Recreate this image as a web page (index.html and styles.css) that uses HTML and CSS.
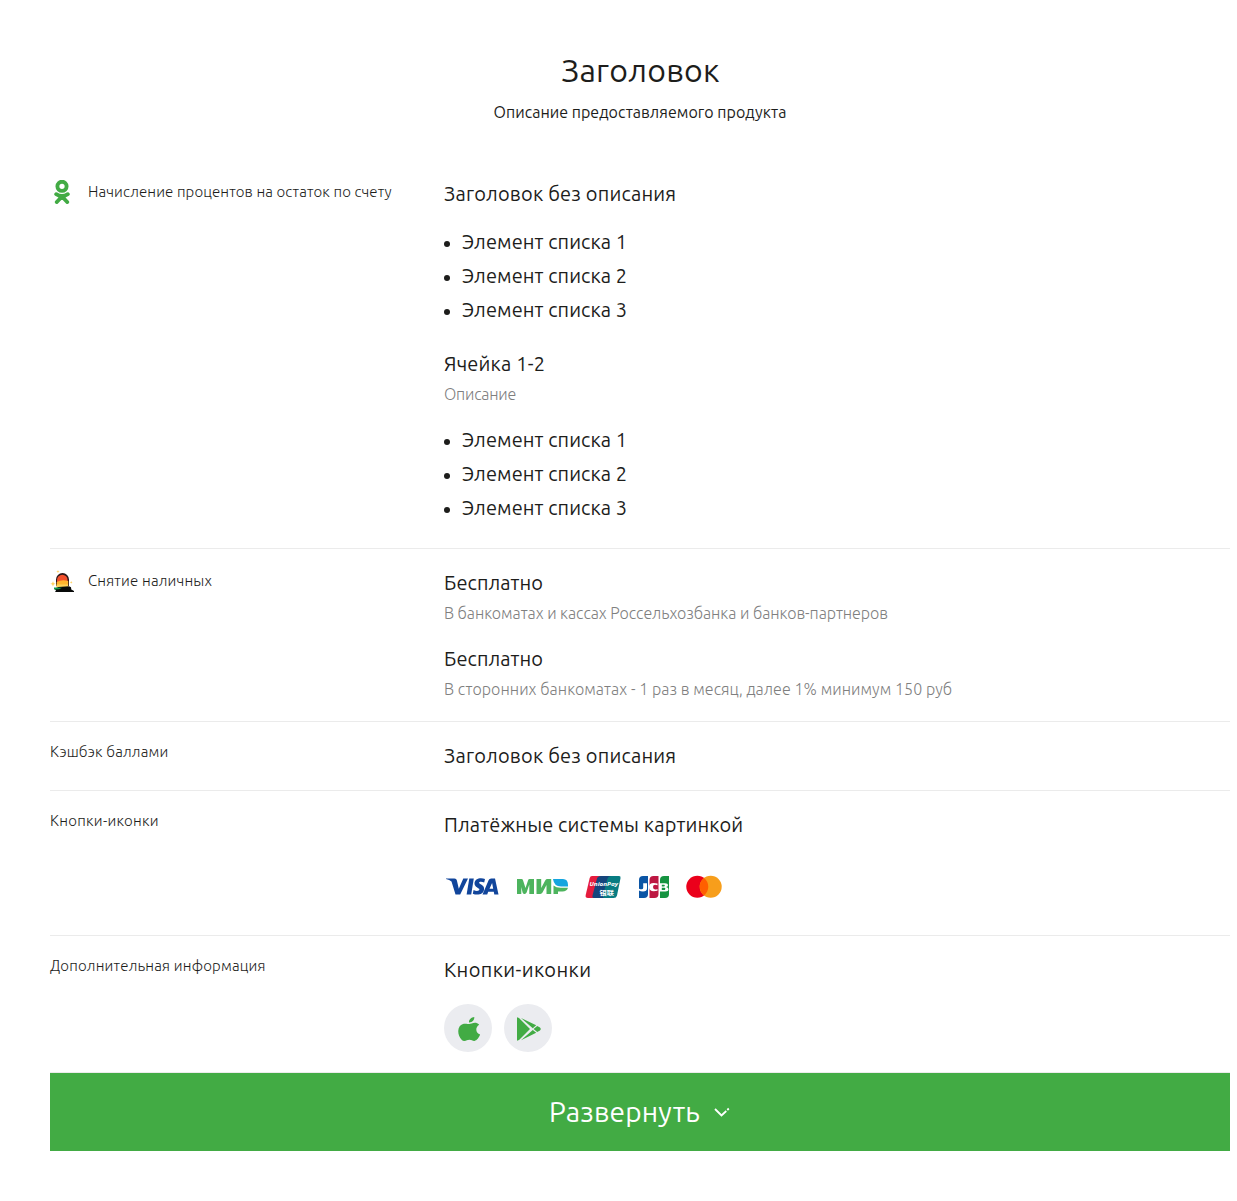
FILE: index.html
```html
<!DOCTYPE html>
<html lang="ru">
<head>
<meta charset="utf-8">
<title>Заголовок</title>
<link rel="stylesheet" href="styles.css">
</head>
<body>
<main class="page">
  <header class="intro">
    <h1 class="title">Заголовок</h1>
    <p class="subtitle">Описание предоставляемого продукта</p>
  </header>
  <section class="row">
    <div class="label">
      <svg class="label-icon" viewBox="0 0 24 24" fill="none" stroke="#42ab44" stroke-linecap="round" stroke-linejoin="round">
        <circle cx="12" cy="6.300" r="4.600" stroke-width="3.900"/>
        <path d="M6.200 14.200Q12 18 17.800 14.200M12 16.500L6.800 22M12 16.500L17.200 22" stroke-width="3.900"/>
      </svg>
      <span class="label-text long">Начисление процентов на остаток по счету</span>
    </div>
    <div class="cells">
      <div class="cell">
        <h2 class="heading">Заголовок без описания</h2>
        <ul class="list"><li>Элемент списка 1</li><li>Элемент списка 2</li><li>Элемент списка 3</li></ul>
      </div>
      <div class="cell">
        <h2 class="heading">Ячейка 1-2</h2>
        <p class="note tight">Описание</p>
        <ul class="list"><li>Элемент списка 1</li><li>Элемент списка 2</li><li>Элемент списка 3</li></ul>
      </div>
    </div>
  </section>
  <section class="row">
    <div class="label">
      <svg class="label-icon" viewBox="0 0 24 24">
        <path d="M6 17v-6.500a6.500 6.500 0 0 1 13 0V17z" fill="#2b1719"/>
        <path d="M7 13v-2a5.300 5.300 0 0 1 10.600 0v2z" fill="#f3502c"/>
        <path d="M6.700 13q5-3 11.500-1v6H6.700z" fill="#ffb52e"/>
        <path d="M6.500 15.500h11.500v2.500H6.500z" fill="#ffd35a"/>
        <path d="M4.500 19.500l4-1.500 10.500-.8 2 1 .3 2.300 2.700 1.400V23H5l1-1.500z" fill="#080a09"/>
        <path d="M4 18.500l8 .2-3 1.500-5 .3z" fill="#159447"/>
        <path d="M3 12.200l.7 2 1.900.6-1.900.7-.7 2-.8-2-1.900-.7 1.900-.6zM8 1l.4 1.200 1.300.4L8.400 3 8 4.300 7.500 3l-1.300-.4 1.300-.4zM21.200 12l.4 1 1 .4-1 .4-.4 1-.4-1-1-.4 1-.4z" fill="#ffcf56"/>
      </svg>
      <span class="label-text">Снятие наличных</span>
    </div>
    <div class="cells">
      <div class="cell">
        <h2 class="heading short">Бесплатно</h2>
        <p class="note snug">В банкоматах и кассах Россельхозбанка и банков-партнеров</p>
      </div>
      <div class="cell">
        <h2 class="heading short">Бесплатно</h2>
        <p class="note loose">В сторонних банкоматах - 1 раз в месяц, далее 1% минимум 150 руб</p>
      </div>
    </div>
  </section>
  <section class="row">
    <div class="label plain"><span class="label-text">Кэшбэк баллами</span></div>
    <div class="cells"><h2 class="heading">Заголовок без описания</h2></div>
  </section>
  <section class="row">
    <div class="label plain"><span class="label-text wide">Кнопки-иконки</span></div>
    <div class="cells">
      <h2 class="heading systems">Платёжные системы картинкой</h2>
      <svg class="payments" viewBox="0 0 280 56">
        <g fill="#11459b">
          <path d="M2 19.500h8.500q2 0 2.400 2l1.900 8.300 4.500-10.300H24L16.200 35.500h-4.700L7.500 22.500Q5.500 20.800 2 20z"/>
          <path d="M25.300 19.500h4.500L27.200 35.500h-4.600z"/>
          <path d="M41 20l-.8 3.500c-2.400-1-5-1-5.100.3 0 1.500 5 2 5 5.900 0 5.900-7 7-11.300 5l.8-3.700c2.700 1.400 5.800 1.100 5.800-.7 0-1.500-4.900-2-4.900-5.900 0-5 6.300-6.300 10.500-4.400z"/>
          <path fill-rule="evenodd" d="M47.200 19.500H51L54.500 35.500h-4.200l-.5-2.700h-5.600L43.200 35.500h-4.700l6.200-14.500q.6-1.500 2.500-1.500zm.9 4.500l-2.600 5.700h3.700z"/>
        </g>
        <g fill="#4db45e">
          <path d="M73 20h4.500q1.200 0 1.600 1.400L81.500 29l2.500-7.600q.4-1.400 1.600-1.400H90v15h-4.700v-9.500L82.600 33.600Q82 35 80.700 35h-.6q-1.100 0-1.500-1.400L77.300 28v7H73z"/>
          <path d="M92.500 20h4.700v9l4-7.600q.8-1.400 2.200-1.400h3.800v15h-4.700v-9l-4 7.600Q97.700 35 96.300 35h-3.800z"/>
          <path d="M109.500 26.500q2.600 2.200 7 2.200H124Q122.800 32.500 118.500 32.500H114V35h-4.500z"/>
        </g>
        <path d="M109 20h10q5 0 5 6v1.500h-7q-7 0-8-7.500z" fill="#14a5df"/>
        <path d="M148 17h12l-5 22h-11q-3 0-2.300-3l4-17q.5-2 2.300-2z" fill="#e51b3d"/>
        <path d="M157 17h11l-5 22h-13q-2 0-1.500-2.500l4.500-17q.6-2.500 4-2.500z" fill="#15457c"/>
        <path d="M167 17h8q2 0 1.500 2.200L173 36.500q-.6 2.500-3.500 2.500h-9q-2 0-1.500-2.500l4.500-17q.6-2.500 3.500-2.500z" fill="#087c82"/>
        <text x="145.500" y="27" class="union" textLength="28.500" lengthAdjust="spacingAndGlyphs">UnionPay</text>
        <text x="155.500" y="36.300" class="cjk" textLength="14.500" lengthAdjust="spacingAndGlyphs">银联</text>
        <path d="M195 21q0-4 4-4h5v18q0 4-4 4h-5z" fill="#0b55a5"/>
        <path d="M205.500 21q0-4 4-4h5v18q0 4-4 4h-5z" fill="#bd1742"/>
        <path d="M216 21q0-4 4-4h5v18q0 4-4 4H216z" fill="#169441"/>
        <path d="M199.200 24.300h3.800v4.900q0 3.300-4 3.300-2.500 0-4-1.100v-1.600q4.200 1.500 4.200-1zM213.500 24.500v1.800q-4.500-1.600-4.500 1.800t4.500 1.800v1.900q-8.500 1.800-8.500-3.700t8.500-3.600zM215.500 24.300h5.500q3 0 3 2 0 1.500-2 1.800 2.500.3 2.500 2.100 0 2.200-3.200 2.200H215.500z" fill="#fff"/>
        <path d="M217.800 25.700h2.500q1.200.9 0 1.700h-2.500zm0 3.100h3q1.300 1 0 2.100h-3z" fill="#169441"/>
        <circle cx="253.300" cy="27.700" r="11" fill="#eb001b"/><circle cx="266.700" cy="27.700" r="11" fill="#f79e1b"/>
        <path d="M260 19a11 11 0 0 1 0 17.400A11 11 0 0 1 260 19z" fill="#ff5f00"/>
      </svg>
    </div>
  </section>
  <section class="row">
    <div class="label plain"><span class="label-text">Дополнительная информация</span></div>
    <div class="cells">
      <h2 class="heading wide">Кнопки-иконки</h2>
      <div class="stores">
        <a class="store" aria-label="Apple"><svg viewBox="0 0 24 24"><path d="M18.300 1c.3 3-2.200 5.600-5.300 5.400C12.900 3.500 15.400 1.200 18.300 1zM23.200 8.700c-4.300 2.600-3.600 8.200.9 9.900-1.100 3-3.300 6.200-5.600 6.300-2.200.1-2.600-1.100-5-1.100s-3 1.200-5.100 1.200C4.400 25-.1 15.900 3.700 10.200c3.500-4 7.600-2.100 9.500-2.100 2 0 6.300-3.200 10 .6z"/></svg></a>
        <a class="store" aria-label="Google Play"><svg viewBox="0 0 24 24"><path d="M1 1.200l2 .8L14 13 3 24l-2 .8zM5 2l15.200 7.200-3.400 3zM5 24.200l11.800-10.300 3.400 2.900zM21.200 10L24 11.600q1.800 1.400 0 2.800L21.200 16l-3.600-3z"/></svg></a>
      </div>
    </div>
  </section>
  <button class="expand"><span>Развернуть</span><svg viewBox="0 0 16 16"><path d="M1 5l6.500 6.500L12.300 7M13.300 6l1.500-1.500" /></svg></button>
</main>
</body>
</html>
```
FILE: styles.css
```css
* { box-sizing: border-box; }
body { margin: 0; background: #fff; color: #1d1d1b; font-family: Ubuntu, "Noto Sans", sans-serif; }
h1, h2, p, ul { margin: 0; padding: 0; font-weight: 400; }
.page { width: 1180px; margin: 0 0 50px 50px; }
.intro { height: 160px; padding-top: 50px; text-align: center; }
.title { padding-left: 1px; font-size: 32px; line-height: 40px; letter-spacing: .25px; }
.subtitle { margin-top: 10px; font-size: 16px; line-height: 24px; letter-spacing: .02px; }
.row { display: grid; grid-template-columns: 394px 1fr; padding: 20px 0; border-bottom: 1px solid #ebebeb; }
.label { display: flex; gap: 14px; height: 24px; align-items: center; font-size: 15px; line-height: 20px; font-weight: 300; letter-spacing: .18px; white-space: nowrap; }
.long { letter-spacing: .11px; }
.plain { height: 20px; }
.label-icon { width: 24px; height: 24px; }
.cells { display: grid; gap: 20px; }
.heading, .list { font-size: 20px; line-height: 28px; }
.heading { letter-spacing: .19px; }
.short { letter-spacing: .08px; }
.systems { letter-spacing: .14px; }
.label .wide { letter-spacing: .28px; }
.heading.wide { letter-spacing: .4px; }
.note { margin-top: 4px; font-size: 16px; line-height: 24px; font-weight: 300; color: #7f7f7f; }
.tight { letter-spacing: -.22px; }
.snug { letter-spacing: -.05px; }
.loose { letter-spacing: .05px; }
.list { margin-top: 20px; padding-bottom: 6px; list-style: none; letter-spacing: .09px; }
.list li { display: flex; align-items: center; gap: 12px; margin-bottom: 6px; }
.list li::before { content: ""; width: 6px; height: 6px; margin-top: 4px; border-radius: 50%; background: #1d1d1b; }
.list li:last-child { margin-bottom: 0; }
.payments { display: block; width: 280px; height: 56px; }
.union { font: italic 700 6px "Open Sans", sans-serif; fill: #fff; }
.cjk { font: 700 6px "Noto Sans CJK SC", sans-serif; fill: #fff; }
.stores { display: flex; gap: 12px; }
.store { display: grid; place-items: center; width: 48px; height: 48px; border-radius: 50%; background: #ebecf0; }
.store svg { width: 24px; height: 24px; fill: #42ab44; overflow: visible; }
.expand { display: flex; justify-content: center; align-items: center; gap: 14px; width: 100%; height: 78px; padding: 0 1px 0 0; border: 0; background: #42ab44; color: #fff; font: 400 28px/40px Ubuntu, "Noto Sans", sans-serif; letter-spacing: .2px; }
.expand svg { width: 16px; height: 16px; fill: none; stroke: #fff; stroke-width: 1.800; }
```
